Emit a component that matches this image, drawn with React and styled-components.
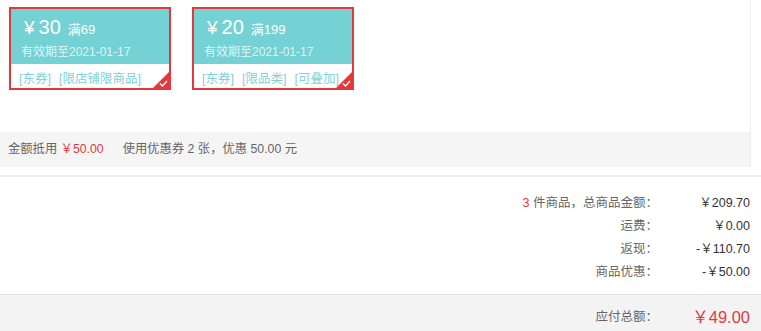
import React from 'react';
import styled, { createGlobalStyle } from 'styled-components';

const GlobalStyle = createGlobalStyle`
  body {
    margin: 0;
    background: #fff;
    font-family: "Liberation Sans", Arial, "Noto Sans CJK SC", sans-serif;
    font-size: 12px;
    color: #666;
  }
`;

const Page = styled.div`
  width: 761px;
  height: 331px;
  overflow: hidden;
`;

const TopBox = styled.div`
  width: 750px;
  border-right: 1px solid #eee;
`;

const CouponList = styled.div`
  display: flex;
  gap: 21px;
  padding: 7px 0 0 9px;
  height: 125px;
`;

const Coupon = styled.div`
  position: relative;
  width: 158px;
  height: 79px;
  border: 2px solid #e4393c;
  display: flex;
  flex-direction: column;
  overflow: hidden;
`;

const CouponTop = styled.div`
  background: #74d1d4;
  height: 55px;
  padding: 7px 0 0 10px;
  box-sizing: border-box;
  color: #fff;
`;

const Price = styled.div`
  display: flex;
  align-items: baseline;
  height: 25px;
  padding-left: 3px;
`;

const Yen = styled.span`
  font-size: 19px;
  margin-right: 4px;
`;

const Amount = styled.span`
  font-size: 20px;
`;

const Limit = styled.span`
  font-size: 13px;
  margin-left: 7px;
`;

const Expire = styled.div`
  font-size: 12px;
  color: #dff4f5;
  margin-top: 1px;
`;

const Tags = styled.div`
  padding: 4px 0 0 8px;
  color: #82d1d5;
  font-size: 12.5px;
  display: flex;
  gap: 8px;
  white-space: nowrap;
`;

const Corner = styled.div`
  position: absolute;
  right: 0;
  bottom: 0;
  width: 0;
  height: 0;
  border-style: solid;
  border-width: 0 0 16px 16px;
  border-color: transparent transparent #e4393c transparent;
`;

const Check = styled.svg`
  position: absolute;
  right: 1px;
  bottom: 1px;
`;

const Band = styled.div`
  background: #f5f5f5;
  height: 35px;
  line-height: 35px;
  padding-left: 8px;
  font-size: 12.3px;
  color: #666;
`;

const Red = styled.span`
  color: #e4393c;
`;

const Gap = styled.span`
  display: inline-block;
  width: 19px;
`;

const Summary = styled.div`
  margin-top: 8px;
  border-top: 2px solid #eee;
  padding: 15px 0 10px;
`;

const Row = styled.div`
  display: flex;
  justify-content: flex-end;
  height: 23px;
  line-height: 23px;
  font-size: 12.5px;
  padding-right: 11px;
`;

const Label = styled.span`
  color: #666;
`;

const Value = styled.span`
  width: 92px;
  text-align: right;
  color: #333;
`;

const Footer = styled.div`
  background: #f3f3f3;
  border-top: 1px solid #e4e4e4;
  padding-top: 11px;
  height: 60px;
`;

const TotalValue = styled(Value)`
  color: #e4393c;
  font-size: 16.5px;
`;

const coupons = [
  { amount: '30', limit: '满69', tags: ['[东券]', '[限店铺限商品]'] },
  { amount: '20', limit: '满199', tags: ['[东券]', '[限品类]', '[可叠加]'] },
];

const rows = [
  { label: <><Red>3</Red> 件商品，总商品金额：</>, value: '￥209.70' },
  { label: '运费：', value: '￥0.00' },
  { label: '返现：', value: '-￥110.70' },
  { label: '商品优惠：', value: '-￥50.00' },
];

export default function App() {
  return (
    <Page>
      <GlobalStyle />
      <TopBox>
        <CouponList>
          {coupons.map((c) => (
            <Coupon key={c.amount}>
              <CouponTop>
                <Price>
                  <Yen>¥</Yen>
                  <Amount>{c.amount}</Amount>
                  <Limit>{c.limit}</Limit>
                </Price>
                <Expire>有效期至2021-01-17</Expire>
              </CouponTop>
              <Tags>
                {c.tags.map((t) => (
                  <span key={t}>{t}</span>
                ))}
              </Tags>
              <Corner />
              <Check width="9" height="7" viewBox="0 0 9 7">
                <path d="M1 3.5 L3.5 6 L8 1" stroke="#fff" strokeWidth="1.4" fill="none" />
              </Check>
            </Coupon>
          ))}
        </CouponList>
        <Band>
          金额抵用 <Red>￥50.00</Red>
          <Gap />
          使用优惠券 2 张，优惠 50.00 元
        </Band>
      </TopBox>
      <Summary>
        {rows.map((r, i) => (
          <Row key={i}>
            <Label>{r.label}</Label>
            <Value>{r.value}</Value>
          </Row>
        ))}
      </Summary>
      <Footer>
        <Row>
          <Label>应付总额：</Label>
          <TotalValue>￥49.00</TotalValue>
        </Row>
      </Footer>
    </Page>
  );
}
